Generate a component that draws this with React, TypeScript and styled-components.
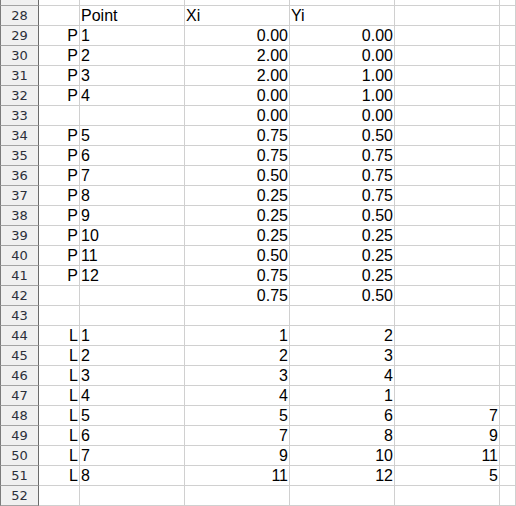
import React from 'react'
import styled, { createGlobalStyle } from 'styled-components'

const GlobalStyle = createGlobalStyle`
  html, body {
    margin: 0;
    padding: 0;
    background: #ffffff;
    overflow: hidden;
  }
`

const Sheet = styled.div`
  display: grid;
  grid-template-columns: 39px 41px 105px 105px 105px 105px 1fr;
  grid-template-rows: 6px;
  grid-auto-rows: 20px;
  width: 516px;
  font-family: 'Liberation Sans', Arial, sans-serif;
  font-size: 16px;
  color: #000;
`

const RowHeader = styled.div<{ $short?: boolean }>`
  box-sizing: border-box;
  height: ${({ $short }) => ($short ? '6px' : '20px')};
  background: #f0f0f0;
  border-left: 1px solid #7c7c7c;
  border-right: 1px solid #6a6a6a;
  border-bottom: 1px solid #a3a3a3;
  font-family: 'DejaVu Sans', Tahoma, sans-serif;
  font-size: 13px;
  color: #2b2f3a;
  display: flex;
  align-items: ${({ $short }) => ($short ? 'flex-end' : 'center')};
  justify-content: center;
  overflow: hidden;

  span {
    line-height: 19px;
    flex-shrink: 0;
  }
`

const Cell = styled.div<{ $align?: 'left' | 'right'; $short?: boolean }>`
  box-sizing: border-box;
  height: ${({ $short }) => ($short ? '6px' : '20px')};
  border-right: 1px solid #d0d0d0;
  border-bottom: 1px solid #d0d0d0;
  padding: 0 1px;
  line-height: 19px;
  text-align: ${({ $align }) => $align || 'left'};
  white-space: nowrap;
  overflow: hidden;
`

type Row = { n: number; b?: string; c?: string; d?: string; e?: string; f?: string }

const rows: Row[] = [
  { n: 28, c: 'Point', d: 'Xi', e: 'Yi' },
  { n: 29, b: 'P', c: '1', d: '0.00', e: '0.00' },
  { n: 30, b: 'P', c: '2', d: '2.00', e: '0.00' },
  { n: 31, b: 'P', c: '3', d: '2.00', e: '1.00' },
  { n: 32, b: 'P', c: '4', d: '0.00', e: '1.00' },
  { n: 33, d: '0.00', e: '0.00' },
  { n: 34, b: 'P', c: '5', d: '0.75', e: '0.50' },
  { n: 35, b: 'P', c: '6', d: '0.75', e: '0.75' },
  { n: 36, b: 'P', c: '7', d: '0.50', e: '0.75' },
  { n: 37, b: 'P', c: '8', d: '0.25', e: '0.75' },
  { n: 38, b: 'P', c: '9', d: '0.25', e: '0.50' },
  { n: 39, b: 'P', c: '10', d: '0.25', e: '0.25' },
  { n: 40, b: 'P', c: '11', d: '0.50', e: '0.25' },
  { n: 41, b: 'P', c: '12', d: '0.75', e: '0.25' },
  { n: 42, d: '0.75', e: '0.50' },
  { n: 43 },
  { n: 44, b: 'L', c: '1', d: '1', e: '2' },
  { n: 45, b: 'L', c: '2', d: '2', e: '3' },
  { n: 46, b: 'L', c: '3', d: '3', e: '4' },
  { n: 47, b: 'L', c: '4', d: '4', e: '1' },
  { n: 48, b: 'L', c: '5', d: '5', e: '6', f: '7' },
  { n: 49, b: 'L', c: '6', d: '7', e: '8', f: '9' },
  { n: 50, b: 'L', c: '7', d: '9', e: '10', f: '11' },
  { n: 51, b: 'L', c: '8', d: '11', e: '12', f: '5' },
  { n: 52 },
]

// row 28 holds text headers, everything else in D/E/F is numeric
const alignFor = (n: number) => (n === 28 ? 'left' : 'right')

const App: React.FC = () => {
  return (
    <>
      <GlobalStyle />
      <Sheet>
        <RowHeader $short>
          <span>27</span>
        </RowHeader>
        {Array.from({ length: 6 }).map((_, i) => (
          <Cell key={`27-${i}`} $short />
        ))}
        {rows.map((r) => (
          <React.Fragment key={r.n}>
            <RowHeader>
              <span>{r.n}</span>
            </RowHeader>
            <Cell $align="right">{r.b}</Cell>
            <Cell>{r.c}</Cell>
            <Cell $align={alignFor(r.n)}>{r.d}</Cell>
            <Cell $align={alignFor(r.n)}>{r.e}</Cell>
            <Cell $align="right">{r.f}</Cell>
            <Cell />
          </React.Fragment>
        ))}
      </Sheet>
    </>
  )
}

export default App
